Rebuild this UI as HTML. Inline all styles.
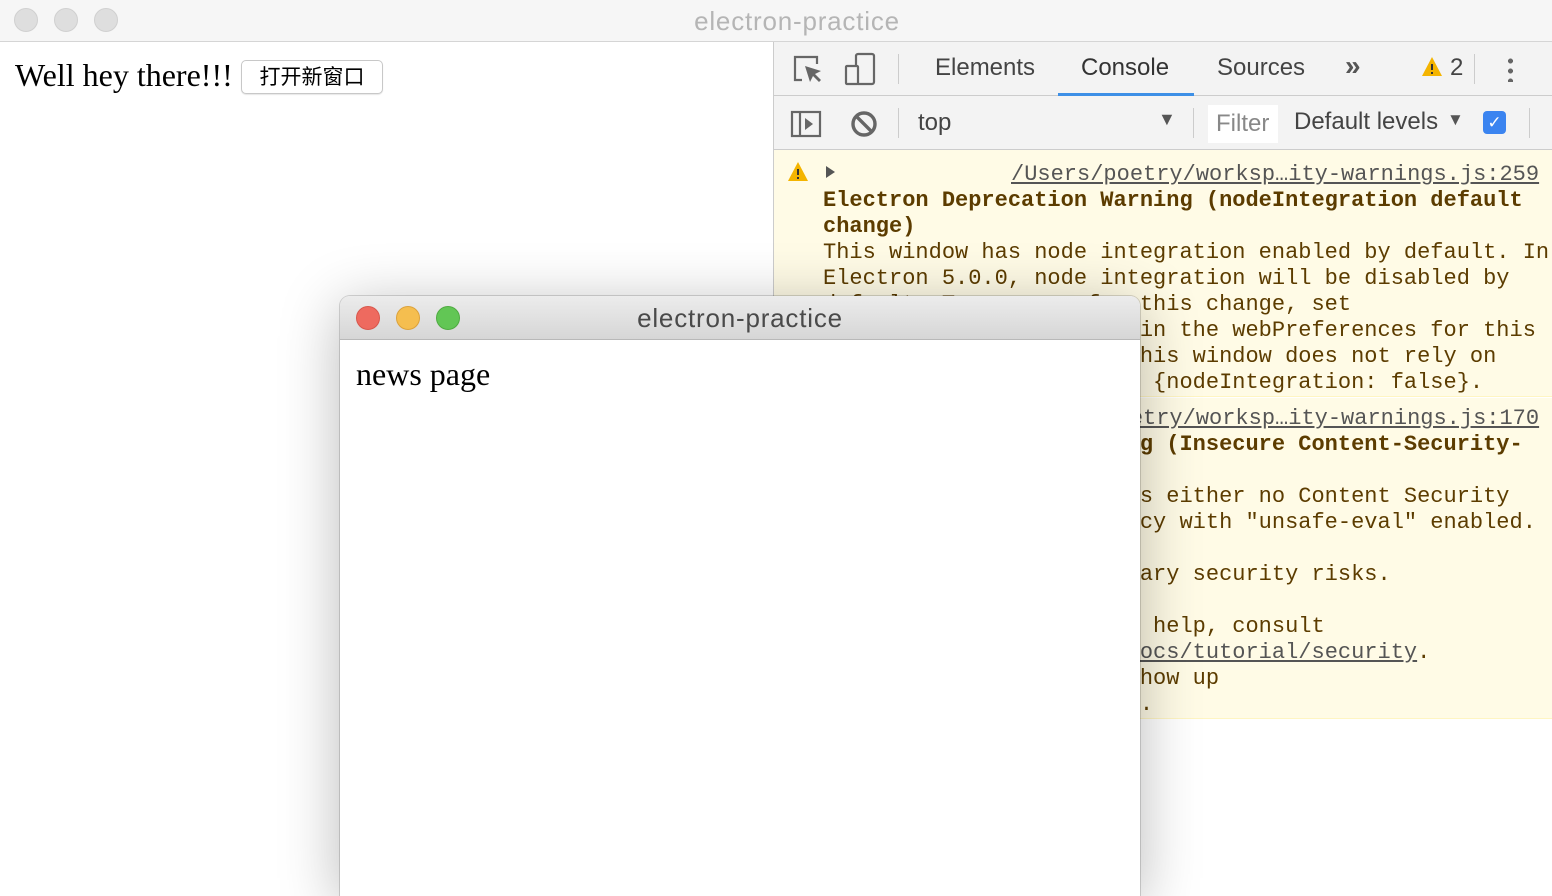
<!DOCTYPE html>
<html><head><meta charset="utf-8"><style>
*{margin:0;padding:0;box-sizing:border-box}
body{width:1552px;height:888px;overflow:hidden;background:#fff;position:relative;font-family:"Liberation Sans",sans-serif}
.tb{position:absolute;left:0;top:0;width:1552px;height:42px;background:#f6f6f6;border-bottom:1px solid #d5d5d5}
.dot{position:absolute;width:24px;height:24px;border-radius:50%;top:8px}
.t{position:absolute;top:6px;left:0;width:1552px;text-align:center;font-size:26px;letter-spacing:0.8px;color:#b5b5b5}
.dev{position:absolute;left:773px;top:42px;width:779px;height:846px;border-left:1px solid #ccc;background:#fff}
.bar1{position:absolute;left:0;top:0;width:779px;height:54px;background:#f3f3f3;border-bottom:1px solid #ccc}
.bar2{position:absolute;left:0;top:54px;width:779px;height:54px;background:#f3f3f3;border-bottom:1px solid #ccc}
.tab{position:absolute;top:12px;font-size:24px;color:#444}
.mono{font-family:"Liberation Mono",monospace;font-size:22px;line-height:26px;color:#5c3c00;white-space:pre;position:absolute;left:49px}
.msg{position:absolute;left:0;width:779px;background:#fffbe6;border-bottom:1px solid #fff5c2}
a{color:#555;text-decoration:underline}
.win{position:absolute;left:340px;top:296px;width:800px;height:600px;background:#fff;border-radius:10px 10px 0 0;box-shadow:0 10px 60px rgba(0,0,0,.28),0 0 0 1px rgba(0,0,0,.15)}
.wt{height:44px;background:linear-gradient(#ececec,#d6d6d6);border-bottom:1px solid #b8b8b8;border-radius:10px 10px 0 0;position:relative}
</style></head><body>
<div class="tb">
<div class="dot" style="left:14px;background:#dedede;border:1px solid #d0d0d0"></div>
<div class="dot" style="left:54px;background:#dedede;border:1px solid #d0d0d0"></div>
<div class="dot" style="left:94px;background:#dedede;border:1px solid #d0d0d0"></div>
<div class="t" style="padding-left:42px">electron-practice</div>
</div>
<div style="position:absolute;left:15px;top:57px;font-family:'Liberation Serif',serif;font-size:32px;color:#000">Well hey there!!!</div>
<div style="position:absolute;left:241px;top:60px;width:142px;height:34px;border:1px solid #c8c8c8;border-radius:5px;background:#fff;box-shadow:0 1px 1px rgba(0,0,0,.1);font-family:'Liberation Sans','Noto Sans CJK SC',sans-serif;font-size:21px;text-align:center;line-height:34px;color:#000">打开新窗口</div>

<div class="dev">
<div class="bar1">
<svg style="position:absolute;left:18px;top:12px" width="32" height="32" viewBox="0 0 32 32" fill="none" stroke="#666" stroke-width="2.2"><path d="M10 26H3V3h22v7"/><path d="M13 12l5 16 3-6 6 6 2-2-6-6 6-3z" fill="#666" stroke="none"/></svg>
<svg style="position:absolute;left:70px;top:10px" width="32" height="34" viewBox="0 0 32 34" fill="none" stroke="#666" stroke-width="2.2"><rect x="12" y="2" width="18" height="30" rx="2"/><rect x="2" y="14" width="12" height="18" rx="1" fill="#f3f3f3"/></svg>
<div style="position:absolute;left:124px;top:12px;width:1px;height:30px;background:#ccc"></div>
<div class="tab" style="left:161px">Elements</div>
<div class="tab" style="left:307px;color:#333">Console</div>
<div style="position:absolute;left:284px;top:51px;width:136px;height:3px;background:#3d8fe6"></div>
<div class="tab" style="left:443px">Sources</div>
<div class="tab" style="left:571px;font-size:28px;top:8px;font-weight:bold;color:#555">»</div>
<svg style="position:absolute;left:647px;top:14px" width="22" height="22" viewBox="0 0 22 22"><path d="M11 1L21 20H1z" fill="#f4b400"/><path d="M11 8v6M11 16v2" stroke="#333" stroke-width="2"/></svg>
<div class="tab" style="left:676px">2</div>
<div style="position:absolute;left:700px;top:12px;width:1px;height:30px;background:#ccc"></div>
<div style="position:absolute;left:734px;top:14px;width:5px;height:26px;background:radial-gradient(circle,#666 2.4px,transparent 2.6px) 0 0/5px 10px repeat-y"></div>
</div>
<div class="bar2">
<svg style="position:absolute;left:16px;top:14px" width="32" height="28" viewBox="0 0 32 28" fill="none" stroke="#666" stroke-width="2.2"><rect x="2" y="2" width="28" height="24"/><path d="M10 2v24"/><path d="M15 8l8 6-8 6z" fill="#666" stroke="none"/></svg>
<svg style="position:absolute;left:76px;top:14px" width="28" height="28" viewBox="0 0 28 28" fill="none" stroke="#666" stroke-width="3.4"><circle cx="14" cy="14" r="11"/><path d="M6 6l16 16"/></svg>
<div style="position:absolute;left:124px;top:12px;width:1px;height:30px;background:#ccc"></div>
<div class="tab" style="left:144px;top:13px">top</div>
<div class="tab" style="left:384px;top:13px;font-size:18px;color:#555">▼</div>
<div style="position:absolute;left:419px;top:12px;width:1px;height:30px;background:#ccc"></div>
<div style="position:absolute;left:434px;top:9px;width:70px;height:38px;background:#fff"></div>
<div class="tab" style="left:442px;top:14px;color:#888">Filter</div>
<div class="tab" style="left:520px;top:12px">Default levels</div>
<div class="tab" style="left:673px;top:14px;font-size:17px;color:#555">▼</div>
<div style="position:absolute;left:709px;top:15px;width:23px;height:23px;background:#3b84f0;border-radius:4px;color:#fff;font-size:17px;text-align:center;line-height:23px">✓</div>
<div style="position:absolute;left:755px;top:12px;width:1px;height:30px;background:#ccc"></div>
</div>
<div class="msg" style="top:108px;height:247px">
<svg style="position:absolute;left:13px;top:11px" width="22" height="22" viewBox="0 0 22 22"><path d="M11 1L21 20H1z" fill="#f4b400"/><path d="M11 8v6M11 16v2" stroke="#333" stroke-width="2"/></svg>
<div style="position:absolute;left:52px;top:16px;width:0;height:0;border-left:9px solid #555;border-top:6px solid transparent;border-bottom:6px solid transparent"></div>
<div class="mono" style="top:12px;left:237px"><a>/Users/poetry/worksp…ity-warnings.js:259</a></div>
<div class="mono" style="top:38px"><b>Electron Deprecation Warning (nodeIntegration default
change)</b>
This window has node integration enabled by default. In
Electron 5.0.0, node integration will be disabled by
default. To prepare for this change, set
{nodeIntegration: true} in the webPreferences for this
window, or ensure that this window does not rely on
node integration and set {nodeIntegration: false}.</div>
</div>
<div class="msg" style="top:356px;height:321px">
<div class="mono" style="top:8px;left:237px"><a>/Users/poetry/worksp…ity-warnings.js:170</a></div>
<div class="mono" style="top:34px"><b>Electron Security Warning (Insecure Content-Security-
Policy)</b>
This renderer process has either no Content Security
Policy set or has a policy with "unsafe-eval" enabled.
This exposes users of
exposes user to unnecessary security risks.

For more information and help, consult
https://electronjs.org/d<a>ocs/tutorial/security</a>.
This warnings will not show up
once the app is packaged.</div>
</div>
</div>

<div class="win">
<div class="wt">
<div class="dot" style="left:16px;top:10px;background:#ee6a5f;border:1px solid #d8574c"></div>
<div class="dot" style="left:56px;top:10px;background:#f5be4f;border:1px solid #dca23b"></div>
<div class="dot" style="left:96px;top:10px;background:#62c655;border:1px solid #4fab41"></div>
<div style="position:absolute;left:0;top:7px;width:800px;text-align:center;font-size:26px;letter-spacing:0.8px;color:#4a4a4a">electron-practice</div>
</div>
<div style="position:absolute;left:16px;top:60px;font-family:'Liberation Serif',serif;font-size:32px;color:#000">news page</div>
</div>
</body></html>
